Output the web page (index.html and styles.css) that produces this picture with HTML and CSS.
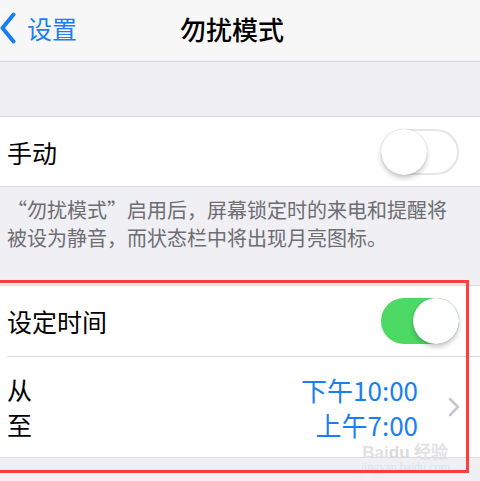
FILE: index.html
```
<!DOCTYPE html>
<html lang="zh-CN">
<head>
  <meta charset="UTF-8" />
  <title>勿扰模式</title>
  <meta name="viewport" content="width=device-width, initial-scale=1.0" />
  <link rel="stylesheet" href="styles.css">
</head>
<body>

  <header class="navbar">
    <a class="back" href="#">
      <svg class="back-icon" width="16" height="32" viewBox="0 0 16 32">
        <polyline points="13.5,2.5 2.5,16 13.5,29.5" fill="none" stroke="#1a7ff5" stroke-width="4" stroke-linecap="round" stroke-linejoin="round" />
      </svg>
      <span>设置</span>
    </a>
    <h1 class="title">勿扰模式</h1>
  </header>

  <section class="group group-first">
    <div class="row">
      <span class="label">手动</span>
      <span class="switch"><span class="knob"></span></span>
    </div>
  </section>

  <p class="note">“勿扰模式”启用后，屏幕锁定时的来电和提醒将<br>被设为静音，而状态栏中将出现月亮图标。</p>

  <div class="marked">
    <section class="group">
      <div class="row row-top">
        <span class="label">设定时间</span>
        <span class="switch on"><span class="knob"></span></span>
      </div>
      <div class="row row-times">
        <div class="labels">
          <span>从</span>
          <span>至</span>
        </div>
        <div class="times">
          <span>下午10:00</span>
          <span>上午7:00</span>
        </div>
        <svg class="chevron" width="12" height="20" viewBox="0 0 12 20">
          <polyline points="2,2 10,10 2,18" fill="none" stroke="#c7c7cc" stroke-width="2.5" stroke-linecap="round" stroke-linejoin="round" />
        </svg>
      </div>
    </section>
    <div class="watermark">
      <span class="wm-logo">Bai<b>du</b> 经验</span>
      <span class="wm-url">jingyan.baidu.com</span>
    </div>
    <div class="marker"></div>
  </div>

</body>
</html>
```

FILE: styles.css
```
body {
  margin: 0;
  padding-bottom: 24px;
  background: #efeff4;
  font-family: "Noto Sans CJK SC", "Noto Sans", sans-serif;
  color: #000;
}
.navbar {
  height: 62px;
  box-sizing: border-box;
  background: #f7f7f8;
  border-bottom: 1px solid #d3d3d6;
  display: flex;
  align-items: center;
  padding-bottom: 5px;
}
.back {
  display: flex;
  align-items: center;
  color: #1a7ff5;
  text-decoration: none;
  font-size: 25px;
}
.back-icon {
  margin-right: 11px;
  display: block;
}
.title {
  margin: 0 0 0 103px;
  font-size: 26px;
  font-weight: 500;
}
.group {
  background: #fff;
  border-top: 1px solid #dadade;
  border-bottom: 1px solid #dadade;
}
.group-first {
  margin-top: 54px;
}
.row {
  display: flex;
  align-items: center;
  justify-content: space-between;
  padding: 0 21px 0 7px;
  height: 69px;
}
.row-top {
  height: 70px;
}
.label {
  font-size: 25px;
}
.switch {
  width: 78px;
  height: 46px;
  border-radius: 23px;
  border: 2px solid #e6e6e9;
  box-sizing: border-box;
  display: flex;
  align-items: center;
}
.knob {
  width: 46px;
  height: 46px;
  margin-left: -2px;
  border-radius: 50%;
  background: #fff;
  box-shadow: 0 3px 5px rgba(0,0,0,0.22), 0 0 1px rgba(0,0,0,0.25);
}
.switch.on {
  background: #4cd964;
  border-color: #4cd964;
  justify-content: flex-end;
}
.switch.on .knob {
  margin-left: 0;
  margin-right: -2px;
}
.note {
  margin: 0 0 33px;
  padding: 9px 7px 0;
  font-size: 20px;
  line-height: 28px;
  color: #6d6d72;
}
.marked {
  position: relative;
}
.row-times {
  height: 100px;
  margin-left: 7px;
  padding-left: 0;
  border-top: 1px solid #dcdce0;
}
.labels, .times {
  display: flex;
  flex-direction: column;
  font-size: 25px;
  line-height: 35px;
}
.times {
  margin-left: auto;
  align-items: flex-end;
  font-size: 26px;
  color: #1a7ff5;
}
.chevron {
  margin-left: 30px;
  margin-right: -1px;
  display: block;
}
.marker {
  position: absolute;
  left: -6px;
  top: -5px;
  right: 11px;
  bottom: -15px;
  border: 3px solid #ff3d3d;
}
.watermark {
  position: absolute;
  right: 30px;
  bottom: -15px;
  display: flex;
  flex-direction: column;
  align-items: center;
  color: #e2e2e5;
  line-height: 0.9;
}
.wm-logo {
  font-family: "Liberation Sans", sans-serif;
  font-size: 17px;
  font-weight: bold;
}
.wm-logo b {
  color: #dadadd;
}
.wm-url {
  font-family: "Liberation Serif", serif;
  font-size: 12px;
  margin-top: 2px;
}
```
